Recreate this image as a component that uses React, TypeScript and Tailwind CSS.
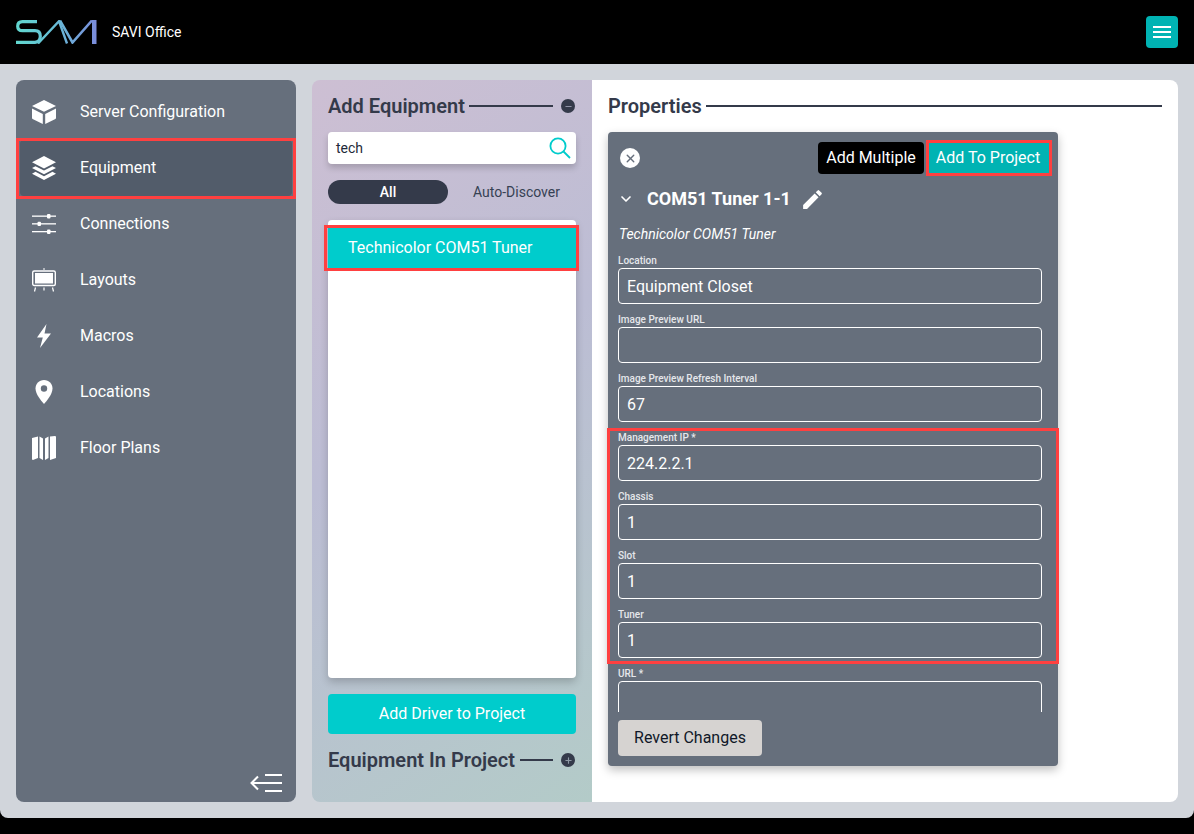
import { ChevronDown, X, Minus, Plus } from 'lucide-react';

function Logo() {
  return (
    <svg width="81" height="24" viewBox="0 0 81 24" fill="none">
      <defs>
        <linearGradient id="logoGrad" x1="0" y1="0" x2="81" y2="0" gradientUnits="userSpaceOnUse">
          <stop offset="0" stopColor="#62d8cf" />
          <stop offset="0.45" stopColor="#66bfd6" />
          <stop offset="1" stopColor="#7b8bdb" />
        </linearGradient>
      </defs>
      <path d="M21 1.7H6.5Q1.7 1.7 1.7 6.2T6.5 10.7H19Q24.3 10.7 24.3 16.3T19 22.3H0" stroke="url(#logoGrad)" strokeWidth="3.2" />
      <path d="M22 23.5L43 1.2L51 23.5" stroke="url(#logoGrad)" strokeWidth="2.4" />
      <path d="M44 0.5L56.5 22.5L76 0.5" stroke="url(#logoGrad)" strokeWidth="2.6" />
      <rect x="76" y="0" width="4.5" height="24" fill="url(#logoGrad)" />
    </svg>
  );
}

function CubeIcon() {
  return (
    <svg width="24" height="24" viewBox="0 0 24 24" fill="white">
      <path d="M12 0L24 6L12 11.8L0 6Z" />
      <path d="M0 8.6L10.8 14V24L0.6 18.9Q0 18.6 0 18Z" />
      <path d="M24 8.6L13.2 14V24L23.4 18.9Q24 18.6 24 18Z" />
    </svg>
  );
}

function LayersIcon() {
  return (
    <svg width="24" height="24" viewBox="0 0 24 24" fill="white">
      <path d="M12 0L24 6.3L12 12.4L0 6.3Z" />
      <path d="M3.5 10.2L12 14.6L20.5 10.2L24 12L12 18.2L0 12Z" />
      <path d="M3.5 15.8L12 20.2L20.5 15.8L24 17.7L12 24L0 17.7Z" />
    </svg>
  );
}

function SlidersIcon() {
  return (
    <svg width="24" height="20" viewBox="0 0 24 20" fill="white">
      <rect x="0" y="1.5" width="24" height="1.3" />
      <rect x="0" y="9.2" width="24" height="1.3" />
      <rect x="0" y="17" width="24" height="1.3" />
      <rect x="15" y="0" width="3.5" height="4.4" rx="1" />
      <rect x="5.5" y="7.7" width="3.5" height="4.4" rx="1" />
      <rect x="15" y="15.5" width="3.5" height="4.4" rx="1" />
    </svg>
  );
}

function EaselIcon() {
  return (
    <svg width="24" height="24" viewBox="0 0 24 24" fill="none" stroke="white">
      <path d="M12 0V2" strokeWidth="1" />
      <rect x="0.7" y="3" width="22.6" height="14.5" rx="1.5" strokeWidth="1.4" />
      <rect x="3" y="5" width="18" height="10.5" fill="white" stroke="none" />
      <path d="M3.5 19.5L2.5 23.5M12 19.5V22.5M20.5 19.5L21.5 23.5" strokeWidth="1.2" />
    </svg>
  );
}

function BoltIcon() {
  return (
    <svg width="16" height="24" viewBox="0 0 16 24" fill="white">
      <path d="M10.5 0L1 13.5H6.8L4 24L15 9.5H8.5Z" />
    </svg>
  );
}

function PinIcon() {
  return (
    <svg width="18" height="24" viewBox="0 0 18 24">
      <path d="M9 0C4 0 0.5 3.8 0.5 8.5C0.5 14 6 20.5 9 24C12 20.5 17.5 14 17.5 8.5C17.5 3.8 14 0 9 0Z" fill="white" />
      <circle cx="9" cy="8.5" r="3.2" fill="#666f7c" />
    </svg>
  );
}

function MapIcon() {
  return (
    <svg width="24" height="24" viewBox="0 0 24 24" fill="white">
      <path d="M0 2L6 0.5V22L1 24Q0 24 0 23Z" />
      <path d="M7.5 0.5L11 2.5V24L7.5 22Z" />
      <path d="M13 2.5L16.5 0.5V22L13 24Z" />
      <path d="M18 0.5L23 0Q24 0 24 1V22L18 24Z" />
    </svg>
  );
}

const navItems = [
  { label: 'Server Configuration', icon: <CubeIcon /> },
  { label: 'Equipment', icon: <LayersIcon />, active: true },
  { label: 'Connections', icon: <SlidersIcon /> },
  { label: 'Layouts', icon: <EaselIcon /> },
  { label: 'Macros', icon: <BoltIcon /> },
  { label: 'Locations', icon: <PinIcon /> },
  { label: 'Floor Plans', icon: <MapIcon /> },
];

const fields = [
  { label: 'Location', value: 'Equipment Closet' },
  { label: 'Image Preview URL', value: '' },
  { label: 'Image Preview Refresh Interval', value: '67' },
  { label: 'Management IP *', value: '224.2.2.1' },
  { label: 'Chassis', value: '1' },
  { label: 'Slot', value: '1' },
  { label: 'Tuner', value: '1' },
  { label: 'URL *', value: '' },
];

function Field({ label, value }: { label: string; value: string }) {
  return (
    <div className="mb-[5px]">
      <div className="h-[18px] pt-[2px] text-[10px] leading-[18px] font-medium text-gray-200">{label}</div>
      <div className="h-9 rounded border border-white px-2 text-base leading-[36px] text-white">{value}</div>
    </div>
  );
}

function Sidebar() {
  return (
    <aside className="flex w-[280px] shrink-0 flex-col rounded-lg bg-[#666f7c] px-1 pt-1">
      {navItems.map((item) => (
        <div
          key={item.label}
          className={`flex h-14 items-center rounded pl-3 text-base text-white ${item.active ? 'bg-[#525c6a]' : ''}`}
        >
          <span className="flex w-6 shrink-0 justify-center">{item.icon}</span>
          <span className="ml-6">{item.label}</span>
        </div>
      ))}
      <div className="mt-auto flex justify-end pr-[10px] pb-[9px]">
        <svg width="32" height="20" viewBox="0 0 32 20" fill="none" stroke="white" strokeWidth="2">
          <path d="M32 2H15M32 10H2M32 18H15" />
          <path d="M8 3.5L1.5 10L8 16.5" />
        </svg>
      </div>
    </aside>
  );
}

function AddPanel() {
  return (
    <div className="flex w-[280px] shrink-0 flex-col rounded-l-lg bg-[linear-gradient(145deg,#cdbfd3_0%,#bcbdd4_45%,#b3cbc8_100%)] px-4 pt-[14px]">
      <div className="flex h-6 items-center">
        <h2 className="text-xl leading-6 font-semibold text-[#343a4a]">Add Equipment</h2>
        <div className="mx-1 h-0.5 flex-1 bg-[#343a4a]" />
        <span className="mr-px ml-1 flex h-[14px] w-[14px] items-center justify-center rounded-full bg-[#343a4a]">
          <Minus size={9} strokeWidth={3} className="text-[#8f93a6]" />
        </span>
      </div>
      <div className="mt-[14px] flex h-8 items-center justify-between rounded bg-white pr-[5px] pl-2 text-sm text-gray-800 shadow-[0_4px_6px_rgba(0,0,0,0.18)]">
        <span>tech</span>
        <svg width="22" height="22" viewBox="0 0 22 22" fill="none" stroke="#00cccc" strokeWidth="1.8">
          <circle cx="9" cy="9" r="7.6" />
          <path d="M14.5 14.5L21 21" />
        </svg>
      </div>
      <div className="mt-4 flex h-6 items-center text-sm">
        <div className="flex h-6 w-[120px] items-center justify-center rounded-full bg-[#343a4a] font-medium text-white">All</div>
        <div className="flex-1 pl-[9px] text-center text-gray-700">Auto-Discover</div>
      </div>
      <div className="mt-4 h-[458px] rounded bg-white pt-2 shadow-[0_4px_8px_rgba(0,0,0,0.2)]">
        <div className="flex h-10 items-center bg-[#00cccc] pl-5 text-base text-white">Technicolor COM51 Tuner</div>
      </div>
      <button className="mt-4 h-10 rounded bg-[#00cccc] text-base text-white">Add Driver to Project</button>
      <div className="mt-[14px] flex h-6 items-center">
        <h2 className="text-xl leading-6 font-semibold text-[#343a4a]">Equipment In Project</h2>
        <div className="mx-1 ml-[5px] h-0.5 flex-1 bg-[#343a4a]" />
        <span className="mr-px ml-1 flex h-[14px] w-[14px] items-center justify-center rounded-full bg-[#343a4a]">
          <Plus size={9} strokeWidth={3} className="text-[#8f9aa6]" />
        </span>
      </div>
    </div>
  );
}

function PropertiesPanel() {
  return (
    <div className="min-w-0 flex-1 rounded-r-lg bg-white pt-[14px] pr-4 pl-4">
      <div className="flex h-6 items-center">
        <h2 className="text-xl leading-6 font-semibold text-[#343a4a]">Properties</h2>
        <div className="ml-1 h-0.5 flex-1 bg-[#343a4a]" />
      </div>
      <div className="mt-[14px] h-[634px] w-[450px] rounded bg-[#666f7c] shadow-[0_4px_10px_rgba(0,0,0,0.25)]">
        <div className="flex h-[52px] items-center pr-2 pl-3">
          <span className="flex h-5 w-5 items-center justify-center rounded-full bg-white">
            <X size={13} strokeWidth={2.5} className="text-[#666f7c]" />
          </span>
          <button className="ml-auto h-8 w-[106px] rounded bg-black text-base text-white">Add Multiple</button>
          <button className="ml-[2px] h-8 w-[124px] bg-[#00b3b3] text-base text-white">Add To Project</button>
        </div>
        <div className="flex h-[30px] items-center pl-[10px] text-white">
          <ChevronDown size={16} strokeWidth={2.5} />
          <span className="ml-[13px] text-lg font-bold">COM51 Tuner 1-1</span>
          <svg width="25" height="25" viewBox="0 0 24 24" fill="white" className="ml-[9px]">
            <path d="M3 17.25V21h3.75L17.81 9.94l-3.75-3.75L3 17.25zM20.71 7.04a.996.996 0 0 0 0-1.41l-2.34-2.34a.996.996 0 0 0-1.41 0l-1.83 1.83 3.75 3.75 1.83-1.83z" />
          </svg>
        </div>
        <div className="mt-[10px] h-5 pl-[11px] text-sm leading-5 text-white italic">Technicolor COM51 Tuner</div>
        <div className="mt-[6px] h-[462px] overflow-hidden pr-4 pl-[10px]">
          {fields.map((f) => (
            <Field key={f.label} label={f.label} value={f.value} />
          ))}
        </div>
        <button className="mt-2 ml-[10px] h-9 w-[144px] rounded bg-[#d6d3d1] text-base text-gray-900">Revert Changes</button>
      </div>
    </div>
  );
}

export default function App() {
  return (
    <div className="h-[834px] w-[1194px] overflow-hidden bg-black font-['Roboto',sans-serif]">
      <header className="flex h-16 items-center justify-between pr-4 pl-4">
        <div className="flex items-center">
          <Logo />
          <span className="ml-[15px] text-sm text-white">SAVI Office</span>
        </div>
        <button className="flex h-8 w-8 items-center justify-center rounded bg-[#00b3b3]">
          <svg width="18" height="12" viewBox="0 0 18 12" fill="white">
            <rect y="0" width="18" height="2" />
            <rect y="5" width="18" height="2" />
            <rect y="10" width="18" height="2" />
          </svg>
        </button>
      </header>
      <main className="flex h-[754px] gap-4 rounded-b-lg rounded-t-none bg-[#d1d5db] p-4">
        <Sidebar />
        <div className="flex min-w-0 flex-1">
          <AddPanel />
          <PropertiesPanel />
        </div>
      </main>
      {/* annotation boxes from the docs screenshot */}
      <div className="pointer-events-none absolute top-[138px] left-[16px] h-[61px] w-[280px] border-[3px] border-[#ff4040]" />
      <div className="pointer-events-none absolute top-[225px] left-[324px] h-[46px] w-[255px] border-[3px] border-[#ff4040]" />
      <div className="pointer-events-none absolute top-[140px] left-[926px] h-[36px] w-[126px] border-[3px] border-[#ff4040]" />
      <div className="pointer-events-none absolute top-[428px] left-[607px] h-[236px] w-[452px] border-[3px] border-[#ff4040]" />
    </div>
  );
}
